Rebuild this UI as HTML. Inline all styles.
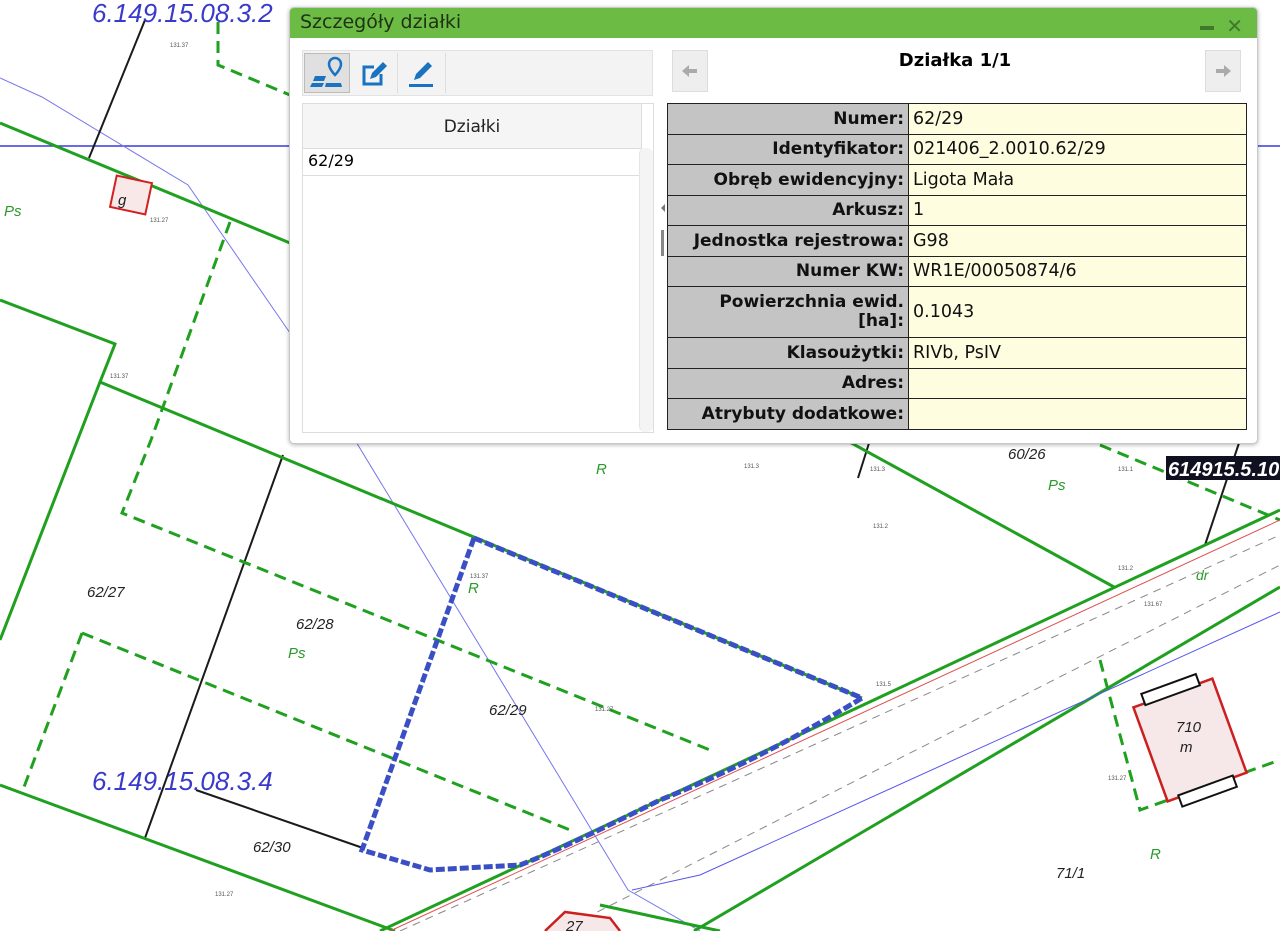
<!DOCTYPE html>
<html><head><meta charset="utf-8"><style>
body{margin:0;width:1280px;height:931px;overflow:hidden;background:#fff;position:relative;font-family:"DejaVu Sans","Liberation Sans",sans-serif}
svg.map{position:absolute;left:0;top:0}
.dlg{position:absolute;left:289px;top:7px;width:967px;height:435px;background:#fff;border:1px solid #c8c8c8;border-radius:5px;box-shadow:0 1px 4px rgba(0,0,0,.3);overflow:hidden}
.title{height:30px;background:#6cbb45;color:#1e3214;font-size:19px;line-height:28px;padding-left:10px}
.ctl{position:absolute;right:14px;top:4px;color:#3f7a2a;font-size:20px}
.tb{position:absolute;left:12px;top:42px;width:351px;height:46px;background:#f3f3f3;border:1px solid #e2e2e2;box-sizing:border-box}
.tbb{position:absolute;top:2px;width:46px;height:40px;border-right:1px solid #ddd}
.grid{position:absolute;left:12px;top:95px;width:352px;height:330px;border:1px solid #ddd;box-sizing:border-box}
.gh{height:44px;background:#f5f5f5;border-bottom:1px solid #ddd;text-align:center;line-height:46px;font-size:17px;color:#222;width:338px;border-right:1px solid #ddd}
.gr{height:26px;line-height:24px;border-bottom:1px solid #ddd;padding-left:5px;font-size:16px;width:333px}
.sb{position:absolute;right:0;top:44px;width:13px;bottom:0;background:#f4f4f4;border-left:1px solid #e5e5e5;border-radius:6px}
.nav{position:absolute;top:42px;width:36px;height:42px;background:#eee;border:1px solid #ddd;box-sizing:border-box}
table{position:absolute;left:377px;top:95px;border-collapse:collapse;width:580px;font-size:17.5px}
td{border:1px solid #222;padding:0 4px;height:29.5px;color:#111;white-space:nowrap}
td.l{background:#c4c4c4;text-align:right;font-weight:bold;width:232px;font-size:17px}
td.v{background:#fffde0}
</style></head><body>
<svg class="map" width="1280" height="931" font-family="Liberation Sans,sans-serif">
<g fill="none">
<line x1="0" y1="146" x2="1280" y2="146" stroke="#3a3ae0" stroke-width="1.5"/>
<polyline points="0,78 42,97 188,185 290,333 628,890 700,931" stroke="#7777ee" stroke-width="1"/>
<g stroke="#1a1a1a" stroke-width="2">
<line x1="145" y1="20" x2="89" y2="158"/>
<line x1="283" y1="455" x2="145" y2="838"/>
<line x1="196" y1="790" x2="363" y2="848"/>
<line x1="870" y1="440" x2="858" y2="478"/>
<line x1="1240" y1="440" x2="1205" y2="545"/>
</g>
<g stroke="#1fa01f" stroke-width="3">
<line x1="0" y1="123" x2="290" y2="243"/>
<polyline points="0,300 115,344 100,382 862,698"/>
<line x1="100" y1="382" x2="0" y2="640"/>
<line x1="0" y1="785" x2="395" y2="931"/>
<line x1="700" y1="360" x2="1114" y2="587"/>
<line x1="380" y1="931" x2="1280" y2="510"/>
<line x1="694" y1="931" x2="1280" y2="587"/>
<line x1="600" y1="905" x2="720" y2="931"/>
</g>
<g stroke="#1fa01f" stroke-width="3" stroke-dasharray="12,7">
<polyline points="218,22 218,65 290,95"/>
<polyline points="230,222 151,440 122,513 715,752"/>
<polyline points="82,633 24,787"/>
<line x1="82" y1="633" x2="575" y2="832"/>
<polyline points="1100,660 1140,810 1280,760"/>
<line x1="1100" y1="445" x2="1280" y2="520"/>
</g>
<line x1="390" y1="931" x2="1280" y2="520" stroke="#e05050" stroke-width="1"/>
<line x1="400" y1="931" x2="1280" y2="535" stroke="#888" stroke-width="1" stroke-dasharray="8,6"/>
<line x1="560" y1="931" x2="1280" y2="565" stroke="#888" stroke-width="1" stroke-dasharray="8,6"/>
<polyline points="632,890 700,875 1280,612" stroke="#5555ee" stroke-width="1"/>
<path d="M474,538 L862,698 Q760,760 660,800 Q560,850 520,865 L430,870 L362,850 Z" stroke="#3b4fc4" stroke-width="5" stroke-dasharray="9,3"/>
<rect x="113" y="179" width="36" height="32" fill="#f8e8e8" stroke="#d02020" stroke-width="2" transform="rotate(12 131 195)"/>
<g transform="rotate(-20 1190 740)"><rect x="1148" y="690" width="84" height="100" fill="#f6e8e8" stroke="#cc1f1f" stroke-width="2.5"/><rect x="1160" y="680" width="58" height="12" fill="#fff" stroke="#111" stroke-width="2"/><rect x="1160" y="788" width="58" height="12" fill="#fff" stroke="#111" stroke-width="2"/></g>
<path d="M545,931 L565,912 L610,918 L620,931" fill="#f6e8e8" stroke="#cc1f1f" stroke-width="2.5"/>
</g>
<g font-style="italic">
<text x="92" y="22" font-size="26" fill="#3a3ac8">6.149.15.08.3.2</text>
<text x="92" y="790" font-size="26" fill="#3a3ac8">6.149.15.08.3.4</text>
<text x="4" y="216" font-size="15" fill="#2a9a2a">Ps</text>
<text x="596" y="474" font-size="15" fill="#2a9a2a">R</text>
<text x="1048" y="490" font-size="15" fill="#2a9a2a">Ps</text>
<text x="468" y="593" font-size="15" fill="#2a9a2a">R</text>
<text x="288" y="658" font-size="15" fill="#2a9a2a">Ps</text>
<text x="1196" y="580" font-size="14" fill="#2a9a2a">dr</text>
<text x="1150" y="859" font-size="15" fill="#2a9a2a">R</text>
<g font-size="15" fill="#222">
<text x="87" y="597">62/27</text><text x="296" y="629">62/28</text><text x="489" y="715">62/29</text>
<text x="253" y="852">62/30</text><text x="1008" y="459">60/26</text><text x="1056" y="878">71/1</text>
<text x="1176" y="732">710</text><text x="1180" y="752">m</text><text x="566" y="931">27</text><text x="118" y="205">g</text>
</g>
</g>
<rect x="1166" y="456" width="114" height="24" fill="#0f1020"/>
<text x="1168" y="476" font-size="20" fill="#fff" font-style="italic" font-weight="bold">614915.5.10</text>
<g font-size="6" fill="#555"><text x="170" y="47">131.37</text><text x="150" y="222">131.27</text><text x="110" y="378">131.37</text><text x="744" y="468">131.3</text><text x="870" y="471">131.3</text><text x="873" y="528">131.2</text><text x="1118" y="471">131.1</text><text x="1118" y="570">131.2</text><text x="1144" y="606">131.67</text><text x="1108" y="780">131.27</text><text x="215" y="896">131.27</text><text x="470" y="578">131.37</text><text x="595" y="711">131.27</text><text x="876" y="686">131.5</text></g>
</svg>

<div class="dlg">
<div class="title">Szczegóły działki<span class="ctl"><span style="display:inline-block;width:14px;height:4px;background:#3f7a2a;vertical-align:middle;margin-right:12px"></span>✕</span></div>
<div class="tb">
<div class="tbb" style="left:1px;background:#e0e0e0;border:1px solid #bbb;box-sizing:border-box">
<svg width="46" height="40" viewBox="0 0 46 40"><path d="M24 10a6 6 0 0 1 12 0c0 5-6 11-6 11s-6-6-6-11z" fill="none" stroke="#1a73c0" stroke-width="2.5"/><path d="M10 22h11l-2 5H8zM7 29h12l-2 4H5zM21 29h15l1 4H20z" fill="#1a73c0"/></svg></div>
<div class="tbb" style="left:48px"><svg width="46" height="40" viewBox="0 0 46 40"><path d="M23 14h-10v17h17v-10" fill="none" stroke="#1a73c0" stroke-width="3"/><path d="M19 26l2-6 11-11 4 4-11 11z" fill="#1a73c0"/></svg></div>
<div class="tbb" style="left:96px"><svg width="46" height="40" viewBox="0 0 46 40"><path d="M15 27l2-6 12-12 4 4-12 12z" fill="#1a73c0"/><rect x="10" y="31" width="24" height="3" fill="#1a73c0"/></svg></div>
</div>
<div class="grid"><div class="gh">Działki</div><div class="gr">62/29</div><div class="sb"></div></div>
<div style="position:absolute;left:367px;top:196px;width:0;height:0;border:4px solid transparent;border-right-color:#777"></div>
<div style="position:absolute;left:371px;top:222px;width:3px;height:26px;background:#888"></div>
<div class="nav" style="left:382px"><svg width="34" height="40"><path d="M9 20l7-6v4h8v4h-8v4z" fill="#aaa"/></svg></div>
<div class="nav" style="left:915px"><svg width="34" height="40"><path d="M25 20l-7-6v4h-8v4h8v4z" fill="#aaa"/></svg></div>
<div style="position:absolute;left:415px;width:500px;top:42px;text-align:center;font-weight:bold;font-size:18px">Działka 1/1</div>
<table>
<tr><td class="l">Numer:</td><td class="v">62/29</td></tr>
<tr><td class="l">Identyfikator:</td><td class="v">021406_2.0010.62/29</td></tr>
<tr><td class="l">Obręb ewidencyjny:</td><td class="v">Ligota Mała</td></tr>
<tr><td class="l">Arkusz:</td><td class="v">1</td></tr>
<tr><td class="l">Jednostka rejestrowa:</td><td class="v">G98</td></tr>
<tr><td class="l">Numer KW:</td><td class="v">WR1E/00050874/6</td></tr>
<tr><td class="l" style="height:50px;line-height:19px">Powierzchnia ewid.<br>[ha]:</td><td class="v">0.1043</td></tr>
<tr><td class="l">Klasoużytki:</td><td class="v">RIVb, PsIV</td></tr>
<tr><td class="l">Adres:</td><td class="v"></td></tr>
<tr><td class="l">Atrybuty dodatkowe:</td><td class="v"></td></tr>
</table>
</div>
</body></html>
